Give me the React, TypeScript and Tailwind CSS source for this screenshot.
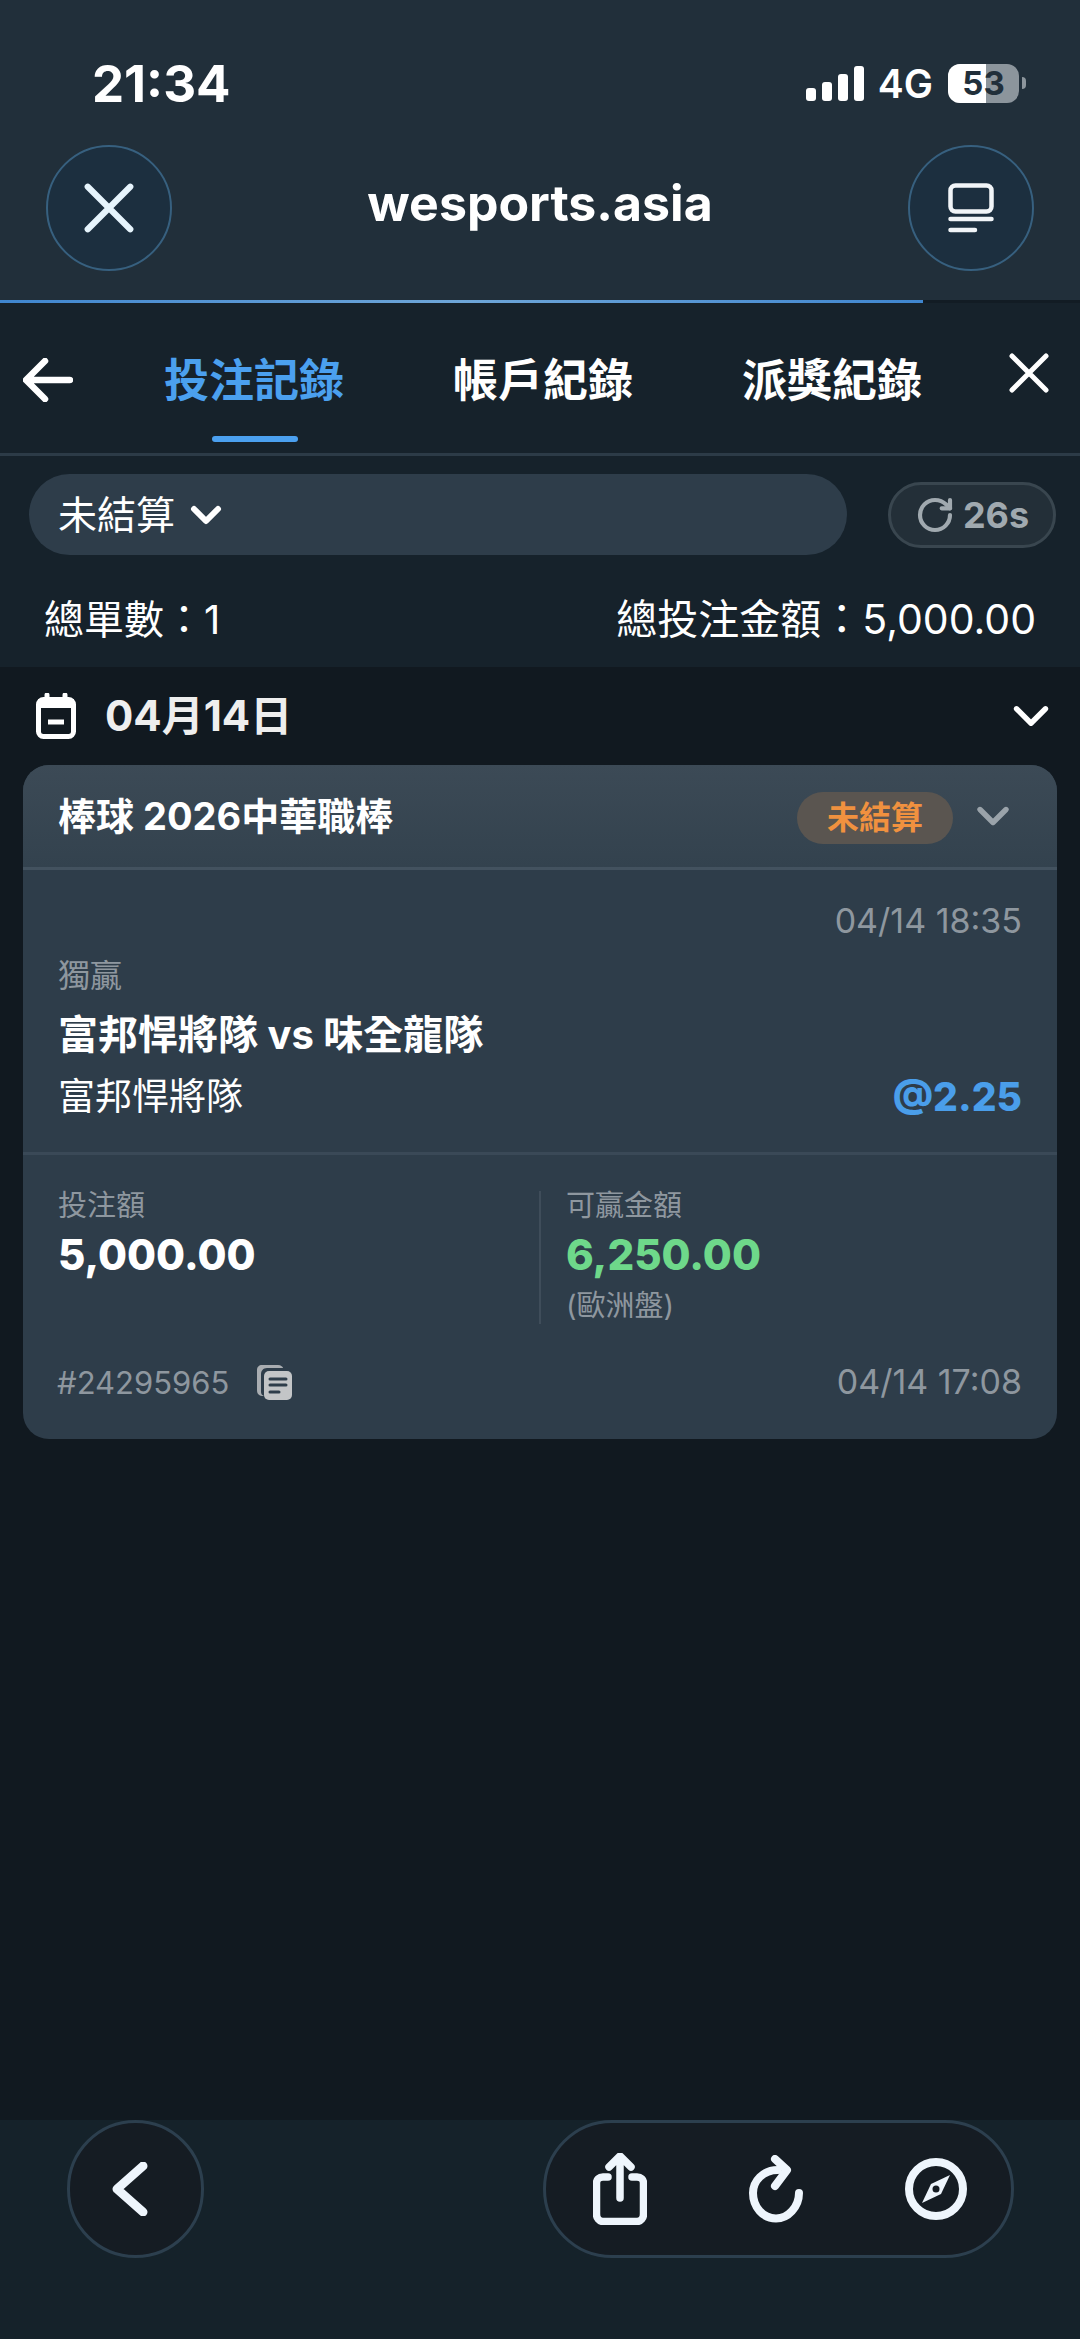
import { ChevronDown, RotateCw } from "lucide-react";

const XIcon = ({ className }: { className: string }) => (
  <svg viewBox="0 0 40 40" fill="none" stroke="currentColor" strokeWidth="5" strokeLinecap="round" className={className}>
    <path d="M3 3 37 37M37 3 3 37" />
  </svg>
);

const SignalBars = () => (
  <div className="flex items-end gap-[6px] h-[35px]">
    <div className="w-[10px] h-[13px] rounded-[3px] bg-white" />
    <div className="w-[10px] h-[19px] rounded-[3px] bg-white" />
    <div className="w-[10px] h-[27px] rounded-[3px] bg-white" />
    <div className="w-[10px] h-[35px] rounded-[3px] bg-white" />
  </div>
);

const Battery = () => (
  <div className="flex items-center gap-[3px]">
    <div className="relative w-[71px] h-[39px] rounded-[12px] overflow-hidden bg-[#8c959c] flex items-center justify-center">
      <div className="absolute left-0 top-0 bottom-0 w-[38px] bg-white" />
      <span className="relative text-[33px] font-bold leading-none text-[#212f3a]">53</span>
    </div>
    <div className="w-[4px] h-[12px] rounded-r-full bg-[#8c959c]" />
  </div>
);

const TopBar = () => (
  <div className="h-[300px] shrink-0 bg-[#212f3a] text-white flex flex-col">
    <div className="h-[90px] mt-[38px] flex items-center justify-between pl-[92px] pr-[54px]">
      <span className="text-[51px] font-bold leading-none">21:34</span>
      <div className="flex items-center">
        <SignalBars />
        <span className="ml-[14px] mr-[15px] text-[39px] font-semibold leading-none">4G</span>
        <Battery />
      </div>
    </div>
    <div className="mt-[17px] flex items-center justify-between px-[46px]">
      <div className="w-[126px] h-[126px] rounded-full border-2 border-[#37607f] bg-[#1c2f3f] flex items-center justify-center">
        <XIcon className="w-[50px] h-[50px] text-[#e6f4fc]" />
      </div>
      <span className="text-[50px] font-bold leading-none -mt-[10px]">wesports.asia</span>
      <div className="w-[126px] h-[126px] rounded-full border-2 border-[#37607f] bg-[#1c2f3f] flex items-center justify-center">
        <svg viewBox="0 0 46 50" fill="none" stroke="#f1f5f8" strokeWidth="4.5" strokeLinecap="round" className="w-[46px] h-[52px]">
          <rect x="2.5" y="2.5" width="41" height="26" rx="5" />
          <path d="M2.5 36H43.5M2.5 47H27" />
        </svg>
      </div>
    </div>
  </div>
);

const Tabs = () => (
  <div className="h-[156px] shrink-0 bg-[#16222b] border-b-[3px] border-[#2c3b47] flex flex-col">
    <div className="h-[3px] flex bg-[#121c24]">
      <div className="w-[923px] bg-gradient-to-r from-[#3f86cf] via-[#6ea6d8] to-[#3f86cf]" />
    </div>
    <div className="relative flex items-center h-[150px] pt-[4px] text-white">
      <svg viewBox="0 0 50 44" fill="none" stroke="currentColor" strokeWidth="6.5" strokeLinecap="round" strokeLinejoin="round" className="ml-[23px] w-[50px] h-[44px]">
        <path d="M47 22H4M22 3 3 22 22 41" />
      </svg>
      <div className="ml-[91px] text-[45px] font-bold leading-none text-[#4ba0ef]">投注記錄</div>
      <div className="ml-[109px] text-[45px] font-bold leading-none">帳戶紀錄</div>
      <div className="ml-[109px] text-[45px] font-bold leading-none">派獎紀錄</div>
      <XIcon className="ml-[87px] -mt-[14px] w-[40px] h-[40px]" />
      <div className="absolute left-[212px] top-[133px] w-[86px] h-[6px] rounded-full bg-[#4ba0ef]" />
    </div>
  </div>
);

const Filters = () => (
  <div className="h-[211px] shrink-0 bg-[#16222b] text-white flex flex-col">
    <div className="mt-[18px] flex items-center justify-between pl-[29px] pr-[24px]">
      <div className="w-[818px] h-[81px] rounded-full bg-[#2e3d4a] flex items-center pl-[29px] text-[39px] leading-none">
        未結算
        <ChevronDown className="ml-[7px] w-[48px] h-[48px]" strokeWidth={3} />
      </div>
      <div className="w-[168px] h-[66px] rounded-full border-[3px] border-[#39464f] bg-[#232f38] flex items-center justify-center text-[#a0a9af]">
        <RotateCw className="w-[40px] h-[40px]" strokeWidth={2.5} />
        <span className="ml-[8px] text-[36px] font-bold leading-none">26s</span>
      </div>
    </div>
    <div className="mt-[44px] flex items-center justify-between pl-[44px] pr-[44px] text-[40px] leading-none">
      <span>總單數：1</span>
      <span className="text-[41px]">總投注金額：5,000.00</span>
    </div>
  </div>
);

const CopyIcon = () => (
  <svg viewBox="0 0 36 36" className="w-[36px] h-[36px]">
    <path d="M8 32C3 32 1 30 1 26V6C1 3 3 1 6 1H22C25 1 27 3 27 4H11C7 4 5 7 5 10V28C5 30 6 31 8 32Z" fill="#a9adb1" />
    <rect x="8" y="7" width="28" height="29" rx="5" fill="#c3c5c7" />
    <path d="M14 15H30M14 21H30M14 28H23" stroke="#2e3d4a" strokeWidth="3" strokeLinecap="round" />
  </svg>
);

const BetCard = () => (
  <div className="mx-[23px] h-[674px] rounded-[26px] overflow-hidden bg-[#2e3d4a] flex flex-col">
    <div className="h-[105px] shrink-0 border-b-[3px] border-[#43525f] bg-gradient-to-b from-[#3c4a56] to-[#33424e] flex items-center pl-[35px] pr-[38px]">
      <span className="text-[38px] font-bold leading-none text-white">棒球 2026中華職棒</span>
      <div className="ml-auto mt-[3px] w-[156px] h-[52px] rounded-full bg-[#5a5550] flex items-center justify-center text-[32px] font-bold leading-none text-[#f0913f]">
        未結算
      </div>
      <ChevronDown className="ml-[14px] w-[52px] h-[52px] text-[#9aa3aa]" strokeWidth={2.5} />
    </div>
    <div className="h-[285px] shrink-0 border-b-[3px] border-[#3a4957] px-[35px] pt-[34px] flex flex-col">
      <div className="text-right text-[34px] leading-none text-[#8e979f]">04/14 18:35</div>
      <div className="mt-[22px] text-[32px] leading-none text-[#8e979f]">獨贏</div>
      <div className="mt-[23px] text-[40px] font-bold leading-none text-white">富邦悍將隊 vs 味全龍隊</div>
      <div className="mt-[22px] flex items-center justify-between">
        <span className="text-[37px] leading-none text-white">富邦悍將隊</span>
        <span className="text-[39px] font-extrabold leading-none text-[#4a9eea]">@2.25</span>
      </div>
    </div>
    <div className="flex pl-[35px] pt-[36px]">
      <div className="w-[481px]">
        <div className="text-[29px] leading-none text-[#8e979f]">投注額</div>
        <div className="mt-[14px] text-[42px] font-extrabold leading-none text-white">5,000.00</div>
      </div>
      <div className="w-[2px] h-[133px] bg-[#3f4d5a]" />
      <div className="ml-[25px]">
        <div className="text-[29px] leading-none text-[#8e979f]">可贏金額</div>
        <div className="mt-[14px] text-[42px] font-extrabold leading-none text-[#6ed88a]">6,250.00</div>
        <div className="mt-[15px] text-[29px] leading-none text-[#8e979f]">(歐洲盤)</div>
      </div>
    </div>
    <div className="mt-[40px] flex items-center justify-between pl-[34px] pr-[35px] text-[31px] leading-none text-[#8e979f]">
      <div className="flex items-center gap-[27px]">
        <span>#24295965</span>
        <CopyIcon />
      </div>
      <span className="text-[34px]">04/14 17:08</span>
    </div>
  </div>
);

const BottomBar = () => (
  <div className="h-[219px] shrink-0 bg-[#15222a] flex items-start justify-between pl-[67px] pr-[66px] text-[#eef5fc]">
    <div className="w-[137px] h-[138px] rounded-full border-[3px] border-[#2c3f4e] bg-[#151c23] flex items-center justify-center">
      <svg viewBox="0 0 36 54" fill="none" stroke="currentColor" strokeWidth="9" strokeLinecap="round" strokeLinejoin="round" className="-ml-[12px] w-[36px] h-[54px]">
        <path d="M31 4 5 27 31 50" />
      </svg>
    </div>
    <div className="w-[471px] h-[138px] rounded-full border-[3px] border-[#2c3f4e] bg-[#151c23] flex items-center justify-between pl-[47px] pr-[44px]">
      <svg viewBox="0 0 54 72" fill="none" stroke="currentColor" strokeWidth="7.5" strokeLinecap="round" strokeLinejoin="round" className="w-[54px] h-[72px]">
        <path d="M15 24H10C6 24 3.500 26.500 3.500 30V61C3.500 65 6 68.500 10 68.500H44C48 68.500 50.500 65 50.500 61V30C50.500 26.500 48 24 44 24H39" />
        <path d="M27 45V4M16 14 27 3 38 14" />
      </svg>
      <svg viewBox="0 0 56 68" fill="none" stroke="currentColor" strokeWidth="8" strokeLinecap="round" strokeLinejoin="round" className="w-[56px] h-[68px]">
        <path d="M51 38C51 52 40 63.500 28 63.500 15 63.500 5 52 5 38 5 26 15 15 30 15" />
        <path d="M27 4 39 15 27 31" />
      </svg>
      <svg viewBox="0 0 62 62" className="w-[62px] h-[62px]">
        <circle cx="31" cy="31" r="27" fill="none" stroke="currentColor" strokeWidth="8" />
        <path d="M45 17 36 36 17 45 26 26Z" fill="currentColor" />
        <circle cx="31" cy="31" r="3.500" fill="#151c23" />
      </svg>
    </div>
  </div>
);

export default function App() {
  return (
    <div className="w-[1080px] h-[2339px] bg-[#111920] flex flex-col font-['Inter','Noto_Sans_CJK_TC',sans-serif]">
      <TopBar />
      <Tabs />
      <Filters />
      <div className="flex-1 flex flex-col">
        <div className="h-[98px] flex items-center pl-[36px] pr-[20px] text-white">
          <svg viewBox="0 0 40 46" fill="none" className="w-[40px] h-[46px]">
            <rect x="2.500" y="6.500" width="35" height="37" rx="5" stroke="#fff" strokeWidth="5" />
            <path d="M2 15H38V6H2Z" fill="#fff" />
            <path d="M11 2V8M29 2V8" stroke="#fff" strokeWidth="5" strokeLinecap="round" />
            <path d="M12 29H28" stroke="#fff" strokeWidth="5" />
          </svg>
          <span className="ml-[29px] text-[42px] font-bold leading-none text-[#eeeeee]">04月14日</span>
          <ChevronDown className="ml-auto w-[58px] h-[58px]" strokeWidth={2.2} />
        </div>
        <BetCard />
      </div>
      <BottomBar />
    </div>
  );
}
